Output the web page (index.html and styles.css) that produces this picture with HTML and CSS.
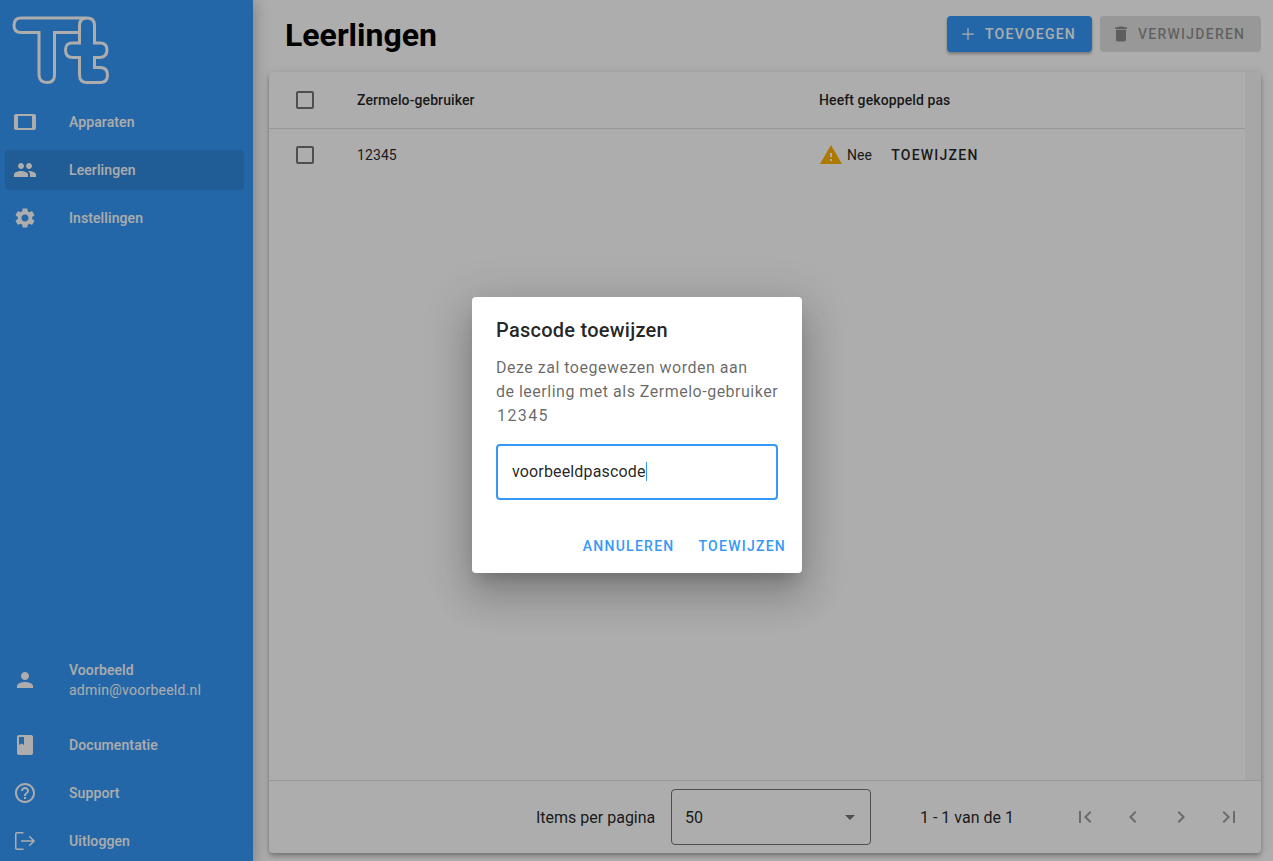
FILE: index.html
```html
<!DOCTYPE html>
<html lang="nl">
<head>
<meta charset="utf-8">
<title>Leerlingen</title>
<link rel="stylesheet" href="styles.css">
</head>
<body>
<div class="app">
  <aside class="sidebar">
    <div class="logo">
      <svg width="120" height="90" viewBox="0 0 120 90" fill="none"><path class="logo-line" d="M21 18H87Q94.500 18 94.500 25.500V43H100Q107 43 107 50T100 57.500H94.500V67.500H100Q107.500 67.500 107.500 75T100 82.500H87Q79.500 82.500 79.500 75V57.500H73Q65.500 57.500 65.500 50T73 43H79.500V25.500Q79.500 18 87 18M79.500 32.500H54.500V75Q54.500 82.500 47 82.500T39 75V32.500H21Q14 32.500 14 25.250T21 18"/></svg>
    </div>
    <nav class="nav">
      <a class="nav-item"><svg class="nav-icon" viewBox="0 0 24 24"><path d="M21 4H3c-1.100 0-2 .9-2 2v12c0 1.100.9 2 2 2h18c1.100 0 1.990-.9 1.990-2L23 6c0-1.100-.9-2-2-2zm-2 14H5V6h14v12z"/></svg><span>Apparaten</span></a>
      <a class="nav-item active"><svg class="nav-icon" viewBox="0 0 24 24"><path d="M16 11c1.660 0 2.990-1.340 2.990-3S17.660 5 16 5c-1.660 0-3 1.340-3 3s1.340 3 3 3zm-8 0c1.660 0 2.990-1.340 2.990-3S9.660 5 8 5C6.340 5 5 6.340 5 8s1.340 3 3 3zm0 2c-2.330 0-7 1.170-7 3.500V19h14v-2.500c0-2.330-4.670-3.500-7-3.500zm8 0c-.29 0-.62.02-.97.05 1.160.84 1.970 1.970 1.970 3.450V19h6v-2.500c0-2.330-4.670-3.500-7-3.500z"/></svg><span>Leerlingen</span></a>
      <a class="nav-item"><svg class="nav-icon" viewBox="0 0 24 24"><path d="M19.140 12.940c.04-.3.06-.61.06-.94 0-.32-.02-.64-.07-.94l2.030-1.580c.18-.14.23-.41.12-.61l-1.920-3.320c-.12-.22-.37-.29-.59-.22l-2.390.96c-.5-.38-1.030-.7-1.620-.94l-.36-2.540c-.04-.24-.24-.41-.48-.41h-3.840c-.24 0-.43.17-.47.41l-.36 2.540c-.59.24-1.130.57-1.620.94l-2.390-.96c-.22-.08-.47 0-.59.22L2.740 8.870c-.12.21-.08.47.12.61l2.030 1.580c-.05.3-.09.63-.09.94s.02.64.07.94l-2.030 1.580c-.18.14-.23.41-.12.61l1.920 3.320c.12.22.37.29.59.22l2.390-.96c.5.38 1.030.7 1.620.94l.36 2.540c.05.24.24.41.48.41h3.840c.24 0 .44-.17.47-.41l.36-2.540c.59-.24 1.130-.56 1.620-.94l2.390.96c.22.08.47 0 .59-.22l1.920-3.320c.12-.22.07-.47-.12-.61l-2.010-1.580zM12 15.600c-1.980 0-3.600-1.620-3.600-3.600s1.620-3.600 3.600-3.600 3.600 1.620 3.600 3.600-1.620 3.600-3.600 3.600z"/></svg><span>Instellingen</span></a>
    </nav>
    <div class="nav bottom">
      <div class="nav-item user"><svg class="nav-icon" viewBox="0 0 24 24"><path d="M12 12c2.210 0 4-1.790 4-4s-1.790-4-4-4-4 1.790-4 4 1.790 4 4 4zm0 2c-2.670 0-8 1.340-8 4v2h16v-2c0-2.660-5.330-4-8-4z"/></svg><div class="user-text"><span>Voorbeeld</span><span class="email">admin@voorbeeld.nl</span></div></div>
      <a class="nav-item"><svg class="nav-icon" viewBox="0 0 24 24"><path d="M18 2H6c-1.100 0-2 .9-2 2v16c0 1.100.9 2 2 2h12c1.100 0 2-.9 2-2V4c0-1.100-.9-2-2-2zM6 4h5v8l-2.500-1.500L6 12V4z"/></svg><span>Documentatie</span></a>
      <a class="nav-item"><svg class="nav-icon" viewBox="0 0 24 24"><path d="M11 18h2v-2h-2v2zm1-16C6.480 2 2 6.480 2 12s4.480 10 10 10 10-4.480 10-10S17.520 2 12 2zm0 18c-4.410 0-8-3.590-8-8s3.590-8 8-8 8 3.590 8 8-3.590 8-8 8zm0-14c-2.210 0-4 1.790-4 4h2c0-1.100.9-2 2-2s2 .9 2 2c0 2-3 1.750-3 5h2c0-2.250 3-2.500 3-5 0-2.210-1.790-4-4-4z"/></svg><span>Support</span></a>
      <a class="nav-item"><svg class="nav-icon" viewBox="0 0 24 24"><path d="M4 4.500h6.500V3H4c-1.100 0-2 .9-2 2v14c0 1.100.9 2 2 2h6.500v-1.500H4c-.3 0-.5-.2-.5-.5V5c0-.3.2-.5.5-.5zM16.800 6.700l-1.060 1.060 3.490 3.490H8v1.500h11.230l-3.490 3.490 1.060 1.060L22.100 12z"/></svg><span>Uitloggen</span></a>
    </div>
  </aside>
  <main class="main">
    <header class="page-header">
      <h1>Leerlingen</h1>
      <div class="actions">
        <button class="btn primary"><svg class="btn-icon" viewBox="0 0 24 24"><path d="M19 12.750h-6.250V19h-1.500v-6.250H5v-1.500h6.250V5h1.500v6.250H19z"/></svg>Toevoegen</button>
        <button class="btn disabled"><svg class="btn-icon" viewBox="0 0 24 24"><path d="M6 19c0 1.100.9 2 2 2h8c1.100 0 2-.9 2-2V7H6v12zM19 4h-3.500l-1-1h-5l-1 1H5v2h14V4z"/></svg>Verwijderen</button>
      </div>
    </header>
    <section class="card">
      <div class="card-body">
        <div class="table">
          <div class="row head">
            <span class="cell-check"><i class="checkbox"></i></span>
            <span class="cell-user">Zermelo-gebruiker</span>
            <span class="cell-pas">Heeft gekoppeld pas</span>
          </div>
          <div class="row">
            <span class="cell-check"><i class="checkbox"></i></span>
            <span class="cell-user">12345</span>
            <span class="cell-pas pas"><svg class="warn" viewBox="0 0 24 24"><path d="M1 21h22L12 2 1 21zm12-3h-2v-2h2v2zm0-4h-2v-4h2v4z"/></svg>Nee<b class="assign">Toewijzen</b></span>
          </div>
        </div>
        <div class="gutter"></div>
      </div>
      <footer class="paginator">
        <span class="per-page">Items per pagina</span>
        <div class="select"><span>50</span><i class="caret"></i></div>
        <span class="range">1 - 1 van de 1</span>
        <div class="pager">
          <svg viewBox="0 0 24 24"><path d="M18.410 16.590 13.820 12l4.590-4.590L17 6l-6 6 6 6zM6 6h2v12H6z"/></svg>
          <svg viewBox="0 0 24 24"><path d="M15.410 7.410 14 6l-6 6 6 6 1.410-1.410L10.830 12z"/></svg>
          <svg viewBox="0 0 24 24"><path d="M10 6 8.590 7.410 13.170 12l-4.580 4.590L10 18l6-6z"/></svg>
          <svg viewBox="0 0 24 24"><path d="M5.590 7.410 10.180 12l-4.590 4.590L7 18l6-6-6-6zM16 6h2v12h-2z"/></svg>
        </div>
      </footer>
    </section>
  </main>
</div>
<div class="backdrop">
  <div class="dialog">
    <h2>Pascode toewijzen</h2>
    <p>Deze zal toegewezen worden aan<br>de leerling met als Zermelo-gebruiker<br><span class="code">12345</span></p>
    <div class="field"><span>voorbeeldpascode</span><i class="text-caret"></i></div>
    <div class="dialog-actions">
      <button class="text-btn">Annuleren</button>
      <button class="text-btn">Toewijzen</button>
    </div>
  </div>
</div>
</body>
</html>
```
FILE: styles.css
```css
* { box-sizing: border-box; }
html, body { margin: 0; height: 100%; overflow: hidden; }
body { font-family: Roboto, "Liberation Sans", sans-serif; color: #000; background: #fff; position: relative; }
button { font-family: inherit; }

.app { display: flex; height: 861px; }

.sidebar {
  width: 253px; flex: none; display: flex; flex-direction: column;
  background: #3699f8; color: #fff;
  box-shadow: 0 3px 14px 2px rgba(0,0,0,.25);
  z-index: 1;
}
.logo { height: 98px; }
.logo svg { display: block; }
.logo-line { stroke: #fff; stroke-width: 3; }

.nav { display: flex; flex-direction: column; }
.nav.bottom { margin-top: auto; margin-bottom: -4px; }
.nav-item {
  height: 48px; display: flex; align-items: center; gap: 32px;
  padding-left: 13px; font-size: 14px; font-weight: 500; line-height: 20px;
  letter-spacing: .1px;
}
.nav-item.active { position: relative; }
.nav-item.active::before {
  content: ""; position: absolute; left: 5px; right: 9px; top: 4px; bottom: 4px;
  background: rgba(0,0,0,.1); border-radius: 4px;
}
.nav-item > * { position: relative; }
.nav-icon { width: 24px; height: 24px; fill: #fff; flex: none; }
.user { height: 64px; margin-bottom: 9px; }
.user-text { display: flex; flex-direction: column; }
.email { font-weight: 400; letter-spacing: .25px; }

.main { flex: 1; min-width: 0; display: flex; flex-direction: column; padding: 0 12px 8px 16px; }
.page-header { height: 72px; display: flex; align-items: flex-start; justify-content: space-between; padding: 16px 0 0 16px; flex: none; }
h1 { margin: 0; font-size: 32px; line-height: 38px; font-weight: 700; }
.actions { display: flex; gap: 8px; }
.btn {
  height: 36px; border: 0; border-radius: 4px; display: flex; align-items: center; gap: 7px;
  padding: 0 0 0 11px; font-size: 14px; font-weight: 500; text-transform: uppercase;
  letter-spacing: 1.25px;
}
.btn-icon { width: 20px; height: 20px; fill: currentColor; }
.primary { width: 145px; background: #3699f8; color: #fff; box-shadow: 0 2px 3px rgba(0,0,0,.3); }
.disabled { width: 161px; background: rgba(0,0,0,.12); color: rgba(0,0,0,.38); }

.card {
  flex: 1; min-height: 0; display: flex; flex-direction: column; background: #fff; border-radius: 4px;
  box-shadow: 0 2px 4px -1px rgba(0,0,0,.2), 0 4px 5px rgba(0,0,0,.14), 0 1px 10px rgba(0,0,0,.12);
}
.card-body { flex: 1; min-height: 0; display: flex; }
.table { flex: 1; min-width: 0; }
.gutter { width: 16px; background: #f7f7f7; border-top-right-radius: 4px; }
.row { display: flex; align-items: center; height: 52px; font-size: 14px; letter-spacing: .1px; color: rgba(0,0,0,.87); }
.row.head { height: 57px; border-bottom: 1px solid rgba(0,0,0,.12); font-weight: 500; }
.cell-check { width: 88px; padding-left: 27px; display: flex; flex: none; }
.cell-user { width: 462px; flex: none; }
.pas { display: flex; align-items: center; }
.checkbox { width: 18px; height: 18px; border: 2px solid rgba(0,0,0,.54); border-radius: 2px; display: block; }
.warn { width: 24px; height: 24px; fill: #ffb300; margin-right: 4px; }
.assign { margin-left: 19px; font-weight: 500; letter-spacing: 1.25px; text-transform: uppercase; }

.paginator {
  height: 73px; flex: none; display: flex; align-items: center; padding-left: 267px;
  border-top: 1px solid rgba(0,0,0,.12); font-size: 16px; color: rgba(0,0,0,.87);
}
.per-page { width: 135px; flex: none; white-space: nowrap; }
.select {
  width: 200px; height: 56px; flex: none; display: flex; align-items: center; justify-content: space-between;
  border: 1px solid rgba(0,0,0,.54); border-radius: 4px; padding: 0 15px 0 14px; font-size: 16px;
}
.select span { margin-left: -1px; }
.caret { border-left: 5px solid transparent; border-right: 5px solid transparent; border-top: 5px solid rgba(0,0,0,.54); }
.range { margin-left: 49px; width: 92px; flex: none; white-space: nowrap; }
.pager { margin-left: 61px; display: flex; gap: 24px; }
.pager svg { width: 24px; height: 24px; fill: rgba(0,0,0,.38); }

.backdrop {
  position: absolute; inset: 0; z-index: 10; background: rgba(0,0,0,.32);
  display: flex; align-items: center; justify-content: center; padding: 9px 0 0 1px;
}
.dialog {
  width: 330px; height: 276px; background: #fff; border-radius: 4px; padding: 20px 24px 0;
  display: flex; flex-direction: column; color: rgba(0,0,0,.87);
  box-shadow: 0 11px 15px -7px rgba(0,0,0,.2), 0 24px 38px 3px rgba(0,0,0,.14), 0 9px 46px 8px rgba(0,0,0,.12);
}
h2 { margin: 0; font-size: 20px; line-height: 26px; font-weight: 500; letter-spacing: .25px; }
.dialog p { margin: 13px 0 0; font-size: 16px; line-height: 24px; letter-spacing: .5px; color: rgba(0,0,0,.6); white-space: nowrap; }
.code { letter-spacing: 1.4px; margin-left: 1px; }
.field {
  margin-top: 16px; height: 56px; border: 2px solid #3699f8; border-radius: 4px;
  display: flex; align-items: center; padding: 0 14px 2px; font-size: 16px; letter-spacing: .15px; flex: none;
}
.text-caret { width: 1px; height: 19px; background: #3699f8; }
.dialog-actions { display: flex; justify-content: flex-end; gap: 8px; margin: 28px -16px 0 0; }
.text-btn {
  border: 0; background: none; height: 36px; padding: 0 8px; color: #3699f8; font-size: 14px;
  font-weight: 500; letter-spacing: 1.25px; text-transform: uppercase;
}
```
